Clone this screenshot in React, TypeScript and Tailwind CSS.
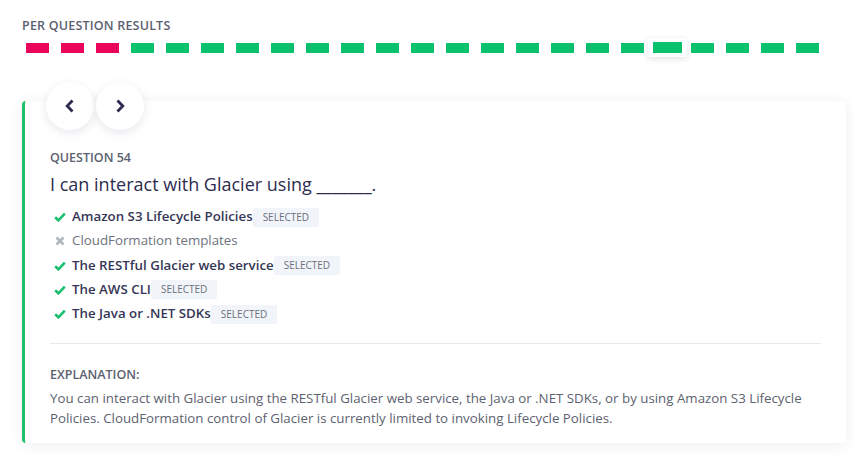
import React from 'react';

const results: ('wrong' | 'right')[] = [
  'wrong', 'wrong', 'wrong',
  ...Array.from({ length: 20 }, () => 'right' as const),
];
const currentIndex = 18;

const options = [
  { text: 'Amazon S3 Lifecycle Policies', correct: true, selected: true },
  { text: 'CloudFormation templates', correct: false, selected: false },
  { text: 'The RESTful Glacier web service', correct: true, selected: true },
  { text: 'The AWS CLI', correct: true, selected: true },
  { text: 'The Java or .NET SDKs', correct: true, selected: true },
];

const Check = () => (
  <svg width="12" height="10" viewBox="0 0 12 10" className="shrink-0">
    <path d="M1.2 5.2 L4.4 8.3 L10.8 1.6" fill="none" stroke="#1cbd6c" strokeWidth="2.6" strokeLinejoin="miter" />
  </svg>
);

const Cross = () => (
  <svg width="12" height="10" viewBox="0 0 12 10" className="shrink-0">
    <path d="M2.5 1.5 L9.5 8.5 M9.5 1.5 L2.5 8.5" fill="none" stroke="#b3b7c0" strokeWidth="2.8" />
  </svg>
);

const Chevron = ({ dir }: { dir: 'left' | 'right' }) => (
  <svg width="12" height="16" viewBox="0 0 12 16">
    <path
      d={dir === 'left' ? 'M8.5 2.5 L3.2 8 L8.5 13.5' : 'M3.5 2.5 L8.8 8 L3.5 13.5'}
      fill="none"
      stroke="#2c2a50"
      strokeWidth="2.8"
    />
  </svg>
);

export default function App() {
  return (
    <div
      className="h-[464px] w-[855px] overflow-hidden bg-white pl-[22px] pt-[17px]"
      style={{ fontFamily: '"Open Sans", "Liberation Sans", sans-serif' }}
    >
      <h3 className="text-[12.5px] font-semibold uppercase leading-[17px] tracking-[0.2px] text-[#5b6170]">
        Per Question Results
      </h3>

      <div className="ml-[4px] mt-[9px] flex items-center gap-[12px]">
        {results.map((r, i) => (
          <div key={i} className="relative h-[10px] w-[23px]">
            {i === currentIndex && (
              <div className="absolute -left-[8px] -top-[5px] h-[19px] w-[39px] rounded-[2px] bg-white shadow-[0_2px_6px_rgba(20,30,60,0.12)]" />
            )}
            <div
              className={
                i === currentIndex
                  ? 'absolute -left-[3px] -top-[1px] h-[11px] w-[29px] bg-[#0cc16e]'
                  : r === 'wrong'
                    ? 'h-[10px] w-[23px] bg-[#e8035b]'
                    : 'h-[10px] w-[23px] bg-[#0cc16e]'
              }
            />
          </div>
        ))}
      </div>

      <section className="mt-[48px] flow-root w-[824px] rounded-[4px] border-l-[3px] border-[#1fbf6e] bg-white pb-[15px] shadow-[0_2px_14px_rgba(30,40,80,0.08)]">
        <div className="-mt-[19px] ml-[21px] flex">
          <button className="flex h-[48px] w-[48px] items-center justify-center rounded-full bg-white shadow-[0_3px_10px_rgba(30,40,80,0.10)]">
            <Chevron dir="left" />
          </button>
          <button className="ml-[2px] flex h-[48px] w-[48px] items-center justify-center rounded-full bg-white shadow-[0_3px_10px_rgba(30,40,80,0.10)]">
            <Chevron dir="right" />
          </button>
        </div>

        <div className="pl-[25px] pr-[25px]">
          <p className="mt-[19px] text-[12.5px] font-semibold uppercase leading-[18px] text-[#5b6170]">
            Question 54
          </p>
          <h2 className="mt-[5px] text-[18px] font-medium leading-[24px] text-[#2d2d4f]">
            I can interact with Glacier using _______.
          </h2>

          <ul className="mt-[9px] flex flex-col">
            {options.map((o) => (
              <li key={o.text} className="flex h-[24.25px] items-center">
                <span className="ml-[4px] mr-[6px] flex w-[12px] items-center">
                  {o.correct ? <Check /> : <Cross />}
                </span>
                <span
                  className={
                    o.correct
                      ? 'text-[13.3px] font-semibold text-[#363656]'
                      : 'text-[13.3px] text-[#6e7380]'
                  }
                >
                  {o.text}
                </span>
                {o.selected && (
                  <span className="flex h-[19px] items-center rounded-[2px] bg-[#f1f4f8] px-[10px] text-[10px] uppercase text-[#6a7080]">
                    Selected
                  </span>
                )}
              </li>
            ))}
          </ul>

          <hr className="mt-[17px] border-t border-[#e8eaee]" />

          <p className="mt-[22px] text-[12.5px] font-semibold uppercase leading-[18px] text-[#5b6170]">
            Explanation:
          </p>
          <p className="mt-[4px] text-[13.3px] leading-[20px] text-[#5d6270]">
            You can interact with Glacier using the RESTful Glacier web service, the Java or .NET SDKs, or by using
            Amazon S3 Lifecycle Policies. CloudFormation control of Glacier is currently limited to invoking Lifecycle
            Policies.
          </p>
        </div>
      </section>
    </div>
  );
}
